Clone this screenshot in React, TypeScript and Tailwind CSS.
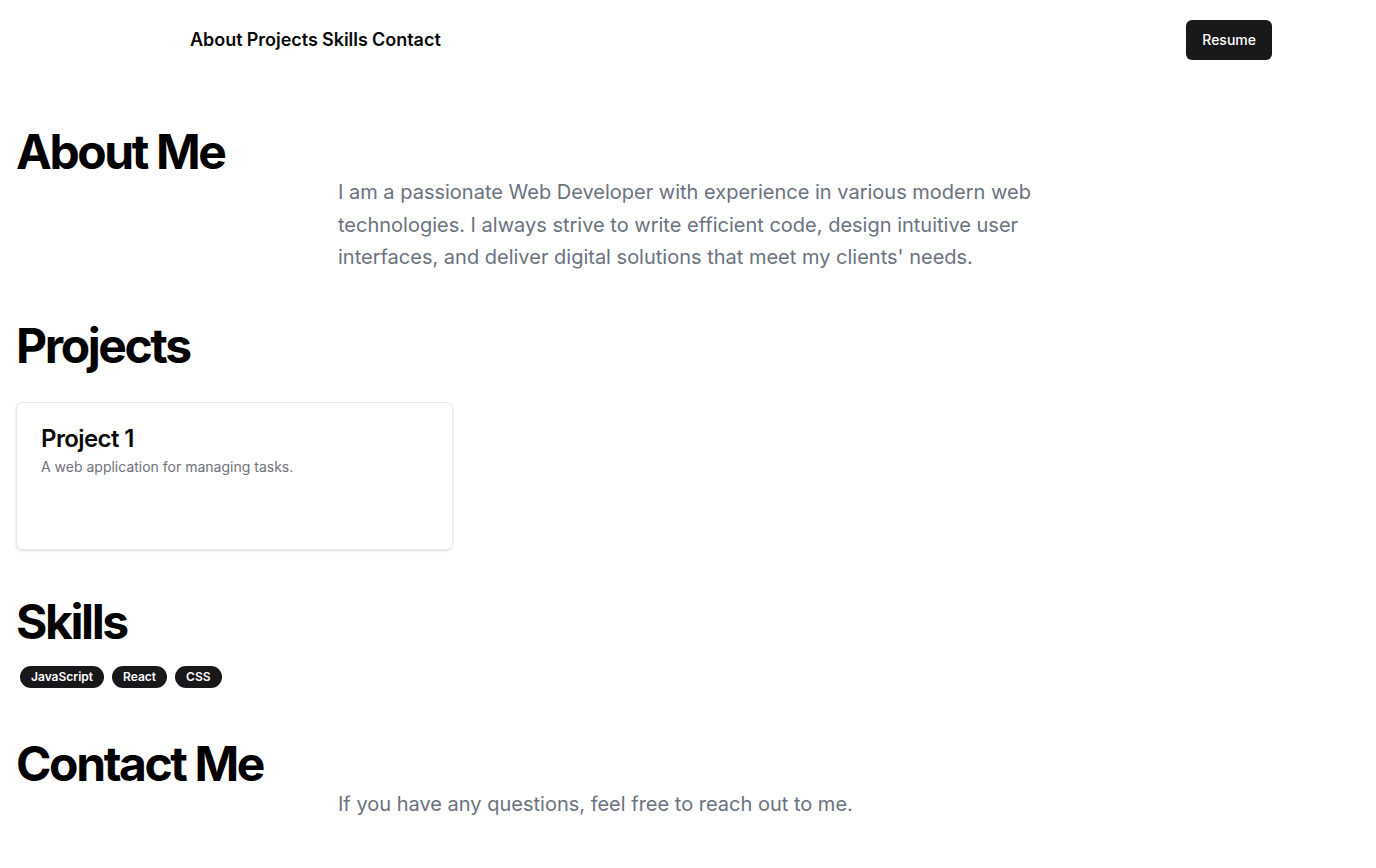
import React from 'react';

const navLinks = ['About', 'Projects', 'Skills', 'Contact'];
const skills = ['JavaScript', 'React', 'CSS'];

const projects = [
  { title: 'Project 1', description: 'A web application for managing tasks.' },
];

const Heading: React.FC<{ children: React.ReactNode }> = ({ children }) => (
  <h2 className="text-5xl font-bold tracking-tighter text-black leading-none">{children}</h2>
);

const App: React.FC = () => {
  return (
    <div className="min-h-screen bg-white text-black" style={{ fontFamily: 'Inter, "Noto Sans", sans-serif' }}>
      <header className="flex items-center justify-between pl-[190px] pr-[104px] py-5">
        <nav className="flex gap-1 text-lg font-semibold text-[#09090b]">
          {navLinks.map((link) => (
            <a key={link} href={`#${link.toLowerCase()}`}>
              {link}
            </a>
          ))}
        </nav>
        <button className="h-10 px-4 rounded-md bg-[#18181b] text-white text-sm font-medium">Resume</button>
      </header>

      <main className="px-4">
        <section id="about" className="mt-12">
          <Heading>About Me</Heading>
          <p className="mx-auto max-w-[700px] text-xl leading-relaxed text-[#6b7280]">
            I am a passionate Web Developer with experience in various modern web technologies. I always strive to
            write efficient code, design intuitive user interfaces, and deliver digital solutions that meet my
            clients' needs.
          </p>
        </section>

        <section id="projects" className="mt-12">
          <Heading>Projects</Heading>
          <div className="grid grid-cols-3 gap-4 mt-8">
            {projects.map((project) => (
              <div key={project.title} className="h-[148px] rounded-md border border-gray-200 shadow-sm p-6">
                <h3 className="text-2xl font-semibold tracking-tight text-[#09090b] leading-none">
                  {project.title}
                </h3>
                <p className="text-sm text-[#71717a] mt-[6px]">{project.description}</p>
              </div>
            ))}
          </div>
        </section>

        <section id="skills" className="mt-12">
          <Heading>Skills</Heading>
          <div className="flex flex-wrap mt-4">
            {skills.map((skill) => (
              <span
                key={skill}
                className="m-1 rounded-full border border-transparent bg-[#18181b] px-2.5 py-0.5 text-xs font-semibold text-white"
              >
                {skill}
              </span>
            ))}
          </div>
        </section>

        <section id="contact" className="mt-12">
          <Heading>Contact Me</Heading>
          <p className="mx-auto max-w-[700px] text-xl leading-relaxed text-[#6b7280]">
            If you have any questions, feel free to reach out to me.
          </p>
        </section>
      </main>
    </div>
  );
};

export default App;
